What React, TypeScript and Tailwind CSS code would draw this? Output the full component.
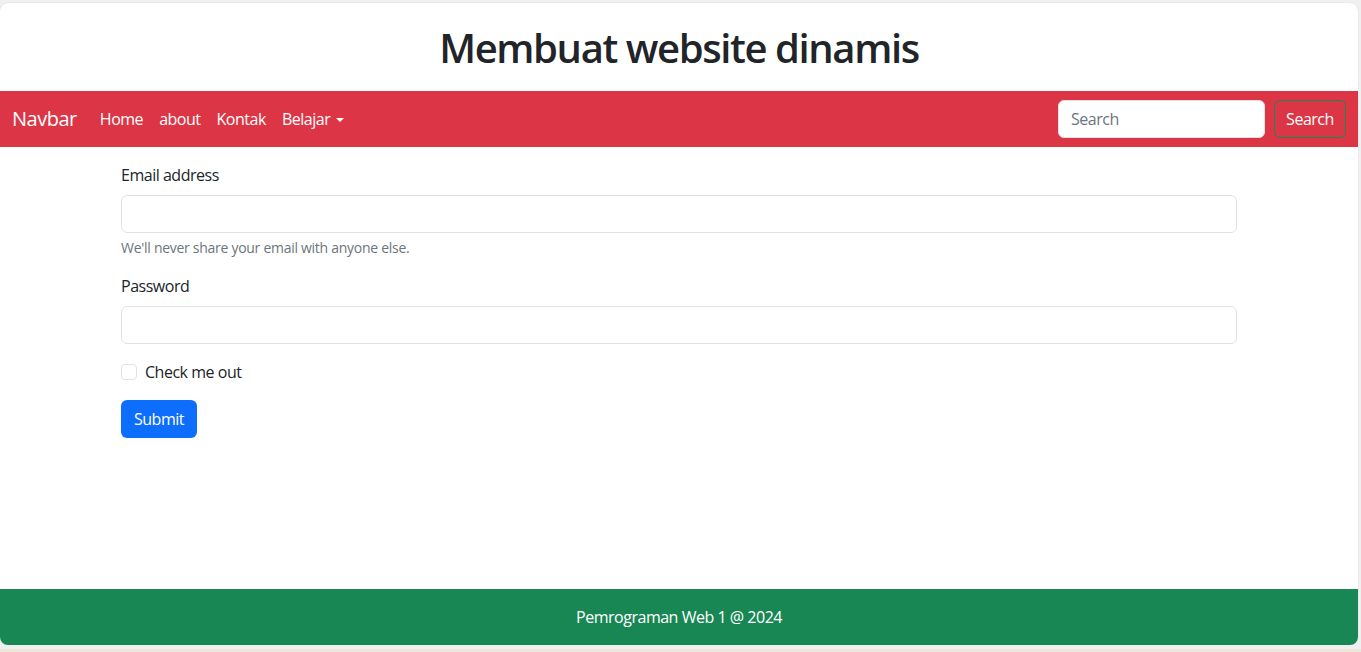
import React, { useState } from 'react';

const App = () => {
    const [email, setEmail] = useState('');
    const [password, setPassword] = useState('');
    const [checked, setChecked] = useState(false);

    return (
        <div className="w-[1361px] h-[652px] bg-[#f0f0f0] overflow-hidden font-['Open_Sans',sans-serif] tracking-[-0.03em] text-[#212529]">
            {/* browser window */}
            <div className="mt-[3px] w-[1358px] h-[642px] bg-white rounded-lg overflow-hidden flex flex-col shadow-[0_0_1px_rgba(0,0,0,0.2)]">
                <header className="h-[88px] flex items-center justify-center">
                    <h1 className="text-[40px] leading-[48px] font-semibold tracking-[-0.035em] pt-[1px]">Membuat website dinamis</h1>
                </header>

                <nav className="h-[56px] bg-[#dc3545] flex items-center px-3 text-white">
                    <a href="#" className="text-[20px] leading-[30px] mr-[15px]">Navbar</a>
                    <ul className="flex items-center text-[16px] leading-6">
                        <li><a href="#" className="px-2 py-2 block">Home</a></li>
                        <li><a href="#" className="px-2 py-2 block">about</a></li>
                        <li><a href="#" className="px-2 py-2 block">Kontak</a></li>
                        <li>
                            <a href="#" className="px-2 py-2 flex items-center">
                                Belajar
                                <span className="ml-[6px] mt-[1px] w-0 h-0 border-x-[4px] border-x-transparent border-t-[4px] border-t-white"></span>
                            </a>
                        </li>
                    </ul>
                    <form className="ml-auto flex items-center gap-[9px]" onSubmit={(e) => e.preventDefault()}>
                        <input
                            type="search"
                            placeholder="Search"
                            className="w-[207px] h-[38px] px-3 rounded-md bg-white border border-[#dee2e6] text-[16px] text-[#212529] placeholder:text-[#6c757d] outline-none"
                        />
                        <button type="submit" className="w-[72px] h-[38px] rounded-md border border-[#198754] text-white text-[16px]">
                            Search
                        </button>
                    </form>
                </nav>

                <main className="flex-1">
                    <form className="max-w-[1140px] mx-auto px-3 mt-4" onSubmit={(e) => e.preventDefault()}>
                        <div className="mb-4">
                            <label htmlFor="email" className="block text-[16px] leading-6 mb-2">Email address</label>
                            <input
                                type="email"
                                id="email"
                                value={email}
                                onChange={(e) => setEmail(e.target.value)}
                                className="w-full h-[38px] px-3 rounded-md border border-[#dee2e6] outline-none"
                            />
                            <div className="mt-1 text-[14px] leading-[21px] tracking-[-0.02em] text-[#6c757d]">We'll never share your email with anyone else.</div>
                        </div>
                        <div className="mb-4">
                            <label htmlFor="password" className="block text-[16px] leading-6 mb-2">Password</label>
                            <input
                                type="password"
                                id="password"
                                value={password}
                                onChange={(e) => setPassword(e.target.value)}
                                className="w-full h-[38px] px-3 rounded-md border border-[#dee2e6] outline-none"
                            />
                        </div>
                        <div className="mb-4 h-6 flex items-center gap-2">
                            <input
                                type="checkbox"
                                id="check"
                                checked={checked}
                                onChange={(e) => setChecked(e.target.checked)}
                                className="appearance-none w-4 h-4 rounded border border-[#dee2e6] checked:bg-[#0d6efd]"
                            />
                            <label htmlFor="check" className="text-[16px] leading-6">Check me out</label>
                        </div>
                        <button type="submit" className="w-[76px] h-[38px] rounded-md bg-[#0d6efd] text-white text-[16px]">
                            Submit
                        </button>
                    </form>
                </main>

                <footer className="h-[56px] bg-[#198754] text-white flex items-center justify-center text-[16px]">
                    Pemrograman Web 1 @ 2024
                </footer>
            </div>
            <div className="mt-[4px] h-[3px] bg-[#ece6d8]"></div>
        </div>
    );
};

export default App;
